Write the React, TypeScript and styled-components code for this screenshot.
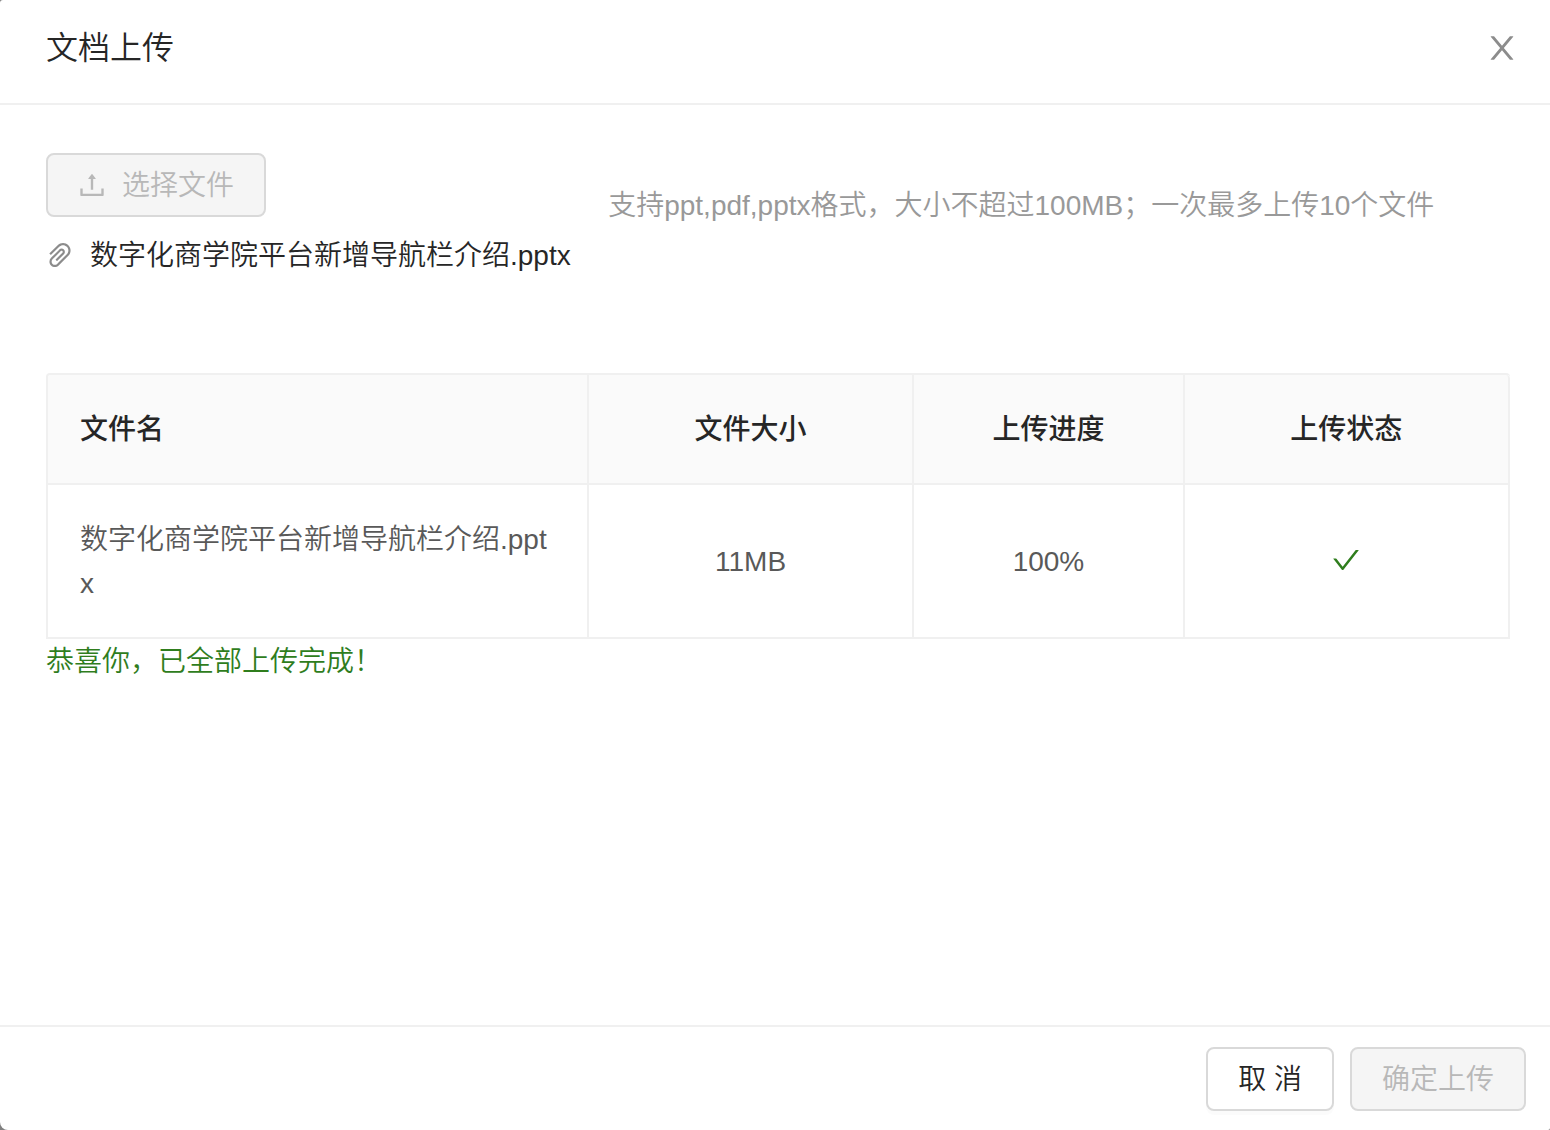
import React from "react";
import styled, { createGlobalStyle } from "styled-components";
import { AiOutlineCheck, AiOutlinePaperClip, AiOutlineUpload } from "react-icons/ai";

const GlobalStyle = createGlobalStyle`
  *, *::before, *::after { box-sizing: border-box; }
  body {
    margin: 0;
    background: #808080;
    color: #262626;
    font-family: "Liberation Sans", "Noto Sans CJK SC", sans-serif;
    font-size: 28px;
    font-weight: 350;
    line-height: 44px;
  }
`;

const Dialog = styled.section`
  display: flex;
  flex-direction: column;
  min-height: 100vh;
  background: #fff;
  border-radius: 3px 0 2px 8px;
`;

const Header = styled.header`
  display: flex;
  align-items: center;
  justify-content: space-between;
  padding: 26px 32px 33px 46px;
  border-bottom: 2px solid #f0f0f0;
`;

const Title = styled.h1`
  margin: 0;
  font-size: 32px;
  font-weight: 350;
  line-height: 44px;
`;

const CloseButton = styled.button`
  display: flex;
  padding: 0;
  border: 0;
  background: none;
  color: #8c8c8c;
  cursor: pointer;
`;

const Body = styled.main`
  flex: 1;
  padding: 48px 40px 48px 46px;
`;

const UploadArea = styled.div`
  display: grid;
  grid-template-columns: 38.4% 1fr;
  margin-bottom: 95px;
`;

const Hint = styled.p`
  margin: 0;
  padding-top: 31px;
  color: #999;
`;

const Button = styled.button`
  display: inline-flex;
  align-items: center;
  gap: 16px;
  height: 64px;
  padding: 2px 30px 0;
  border: 2px solid #d9d9d9;
  border-radius: 8px;
  background: #fff;
  box-shadow: 0 4px 0 rgba(0, 0, 0, 0.016);
  color: #262626;
  font: inherit;
  white-space: pre;
  cursor: pointer;

  svg {
    margin-bottom: 3px;
  }

  &:disabled {
    background: #f5f5f5;
    box-shadow: none;
    color: #b8b8b8;
    cursor: not-allowed;
  }
`;

const FileList = styled.ul`
  margin: 17px 0 0;
  padding: 0;
  list-style: none;
`;

const FileItem = styled.li`
  display: flex;
  align-items: center;
  gap: 16px;
  white-space: nowrap;

  svg {
    flex: none;
    margin-bottom: 3px;
    color: #8c8c8c;
  }
`;

const Table = styled.table`
  width: 100%;
  table-layout: fixed;
  border: 0 solid #f0f0f0;
  border-width: 2px 0 0 2px;
  border-collapse: separate;
  border-spacing: 0;
  border-radius: 4px 4px 0 0;
`;

const Column = styled.col<{ $share: number }>`
  width: ${({ $share }) => $share}%;
`;

const HeadCell = styled.th<{ $align?: string }>`
  padding: 33px 32px 31px;
  border: 0 solid #f0f0f0;
  border-width: 0 2px 2px 0;
  background: #fafafa;
  font-weight: 500;
  text-align: ${({ $align = "center" }) => $align};

  &:first-child {
    border-top-left-radius: 2px;
  }

  &:last-child {
    border-top-right-radius: 4px;
  }
`;

const Cell = styled.td<{ $align?: string }>`
  padding: 33px 32px 31px;
  border: 0 solid #f0f0f0;
  border-width: 0 2px 2px 0;
  color: #595959;
  text-align: ${({ $align = "center" }) => $align};
  word-break: break-all;
`;

const DoneIcon = styled(AiOutlineCheck)`
  display: block;
  margin: 0 auto 4px;
  color: #2f7d1d;
`;

const Success = styled.p`
  margin: 0;
  padding-top: 1px;
  color: #2f7d1d;
`;

const Footer = styled.footer`
  display: flex;
  justify-content: flex-end;
  gap: 16px;
  padding: 20px 24px 19px;
  border-top: 2px solid #f0f0f0;
`;

const iconBox = "64 64 896 896";

const CloseIcon = () => (
  <svg viewBox={iconBox} width="32" height="32" fill="currentColor" aria-hidden="true">
    <path d="M563.8 512l262.5-312.9c4.4-5.2.7-13.1-6.1-13.1h-79.8c-4.7 0-9.2 2.1-12.3 5.7L511.6 449.8 295.1 191.7c-3-3.6-7.5-5.7-12.3-5.7H203c-6.8 0-10.5 7.9-6.1 13.1L459.4 512 196.9 824.9A7.95 7.95 0 0 0 203 838h79.8c4.7 0 9.2-2.1 12.3-5.7l216.5-258.1 216.5 258.1c3 3.6 7.5 5.7 12.3 5.7h79.8c6.8 0 10.5-7.9 6.1-13.1L563.8 512z" />
  </svg>
);

const files = [{ name: "数字化商学院平台新增导航栏介绍.pptx", size: "11MB", progress: "100%" }];

export default function App() {
  return (
    <>
      <GlobalStyle />
      <Dialog role="dialog" aria-labelledby="dialog-title" lang="zh-CN">
        <Header>
          <Title id="dialog-title">文档上传</Title>
          <CloseButton type="button" aria-label="关闭">
            <CloseIcon />
          </CloseButton>
        </Header>
        <Body>
          <UploadArea>
            <div>
              <Button type="button" disabled>
                <AiOutlineUpload viewBox={iconBox} size={28} aria-hidden="true" />
                选择文件
              </Button>
              <FileList>
                {files.map((file) => (
                  <FileItem key={file.name}>
                    <AiOutlinePaperClip viewBox={iconBox} size={28} aria-hidden="true" />
                    <span>{file.name}</span>
                  </FileItem>
                ))}
              </FileList>
            </div>
            <Hint>支持ppt,pdf,pptx格式，大小不超过100MB；一次最多上传10个文件</Hint>
          </UploadArea>
          <Table>
            <colgroup>
              <Column $share={37} />
              <Column $share={22.25} />
              <Column $share={18.5} />
              <Column $share={22.25} />
            </colgroup>
            <thead>
              <tr>
                <HeadCell scope="col" $align="left">文件名</HeadCell>
                <HeadCell scope="col">文件大小</HeadCell>
                <HeadCell scope="col">上传进度</HeadCell>
                <HeadCell scope="col">上传状态</HeadCell>
              </tr>
            </thead>
            <tbody>
              {files.map((file) => (
                <tr key={file.name}>
                  <Cell $align="left">{file.name}</Cell>
                  <Cell>{file.size}</Cell>
                  <Cell>{file.progress}</Cell>
                  <Cell>
                    <DoneIcon viewBox={iconBox} size={28} role="img" aria-label="上传成功" />
                  </Cell>
                </tr>
              ))}
            </tbody>
          </Table>
          <Success role="status">恭喜你，已全部上传完成！</Success>
        </Body>
        <Footer>
          <Button type="button">取 消</Button>
          <Button type="button" disabled>确定上传</Button>
        </Footer>
      </Dialog>
    </>
  );
}
